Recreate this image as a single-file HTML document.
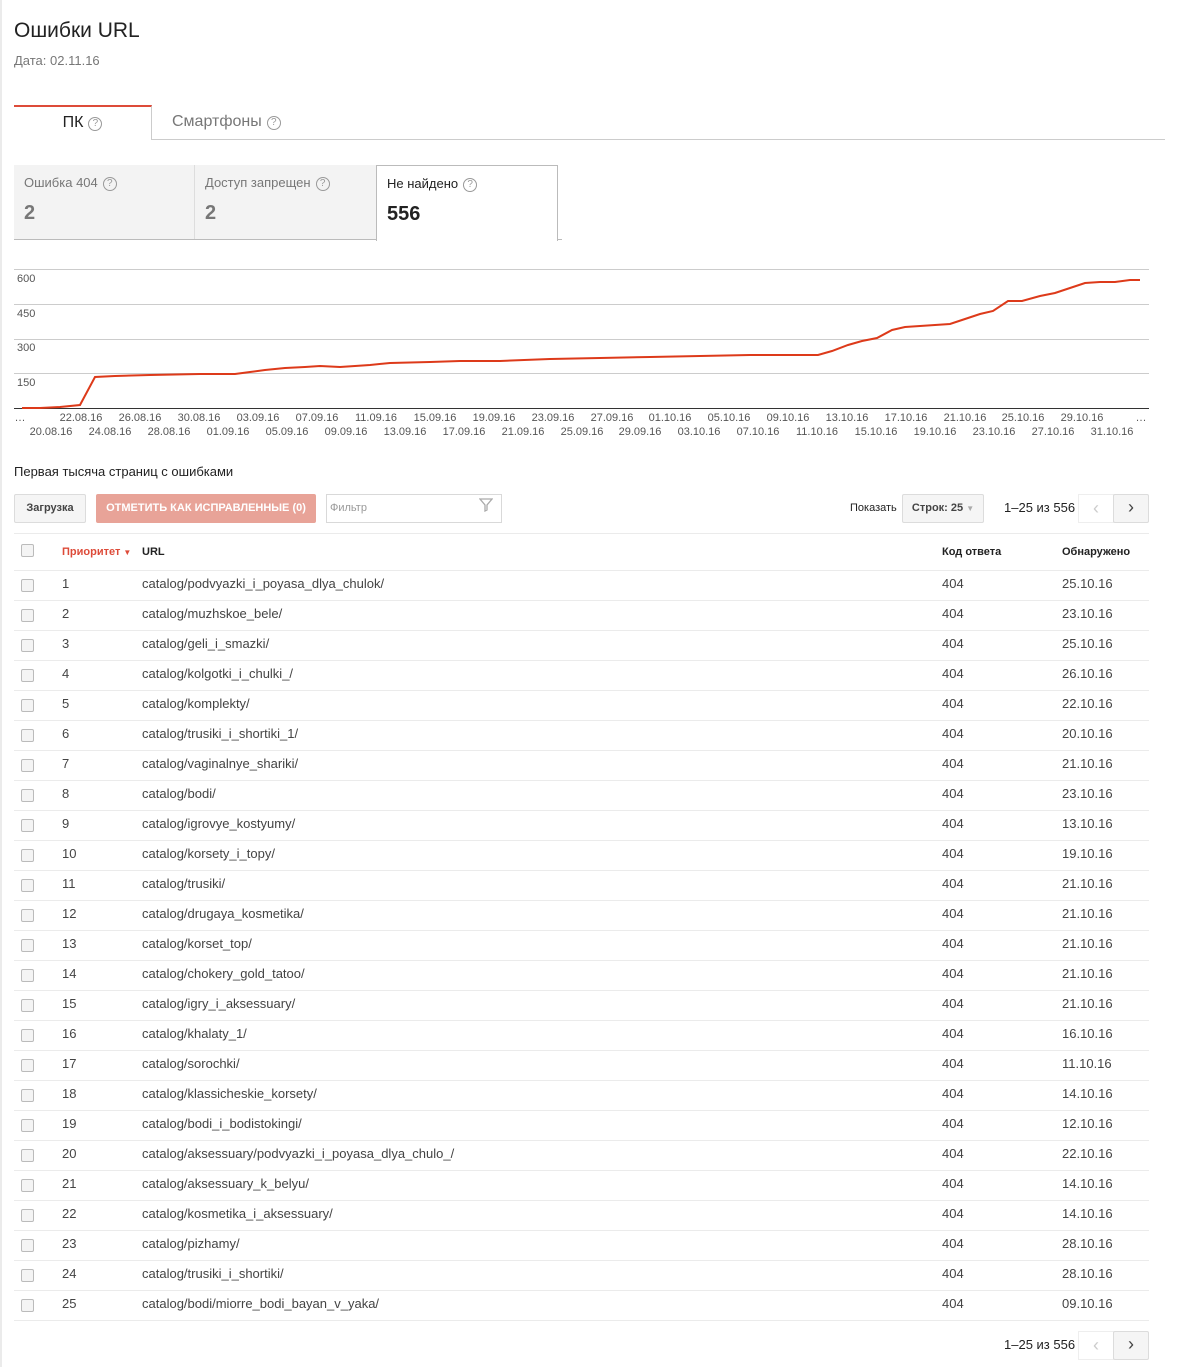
<!DOCTYPE html>
<html><head><meta charset="utf-8">
<style>
*{box-sizing:border-box;margin:0;padding:0}
body{width:1184px;height:1367px;background:#fff;font-family:"Liberation Sans",Arial,sans-serif;position:relative;overflow:hidden;color:#222}
.a{position:absolute;white-space:nowrap}
.q{display:inline-block;width:14px;height:14px;border:1px solid #999;border-radius:50%;font-size:10px;line-height:12px;text-align:center;color:#999;vertical-align:1px;margin-left:5px}
.cb{position:absolute;left:21px;width:13px;height:13px;border:1px solid #bbb;border-radius:2px;background:#f4f4f4}
.row{position:absolute;left:14px;width:1135px;height:30px;border-bottom:1px solid #ebebeb;font-size:13px;color:#444}
.row span{position:absolute;top:5px}
.btn{position:absolute;border:1px solid #dcdcdc;background:#f5f5f5;border-radius:2px;font-size:11px;font-weight:bold;color:#444;text-align:center}
</style></head><body>
<div class="a" style="left:0;top:0;width:2px;height:1367px;background:#ebebeb"></div>
<div class="a" style="left:14px;top:19px;font-size:21px;color:#222">Ошибки URL</div>
<div class="a" style="left:14px;top:53px;font-size:13px;color:#777">Дата: 02.11.16</div>

<div class="a" style="left:14px;top:139px;width:1151px;border-top:1px solid #ccc"></div>
<div class="a" style="left:14px;top:105px;width:138px;height:35px;background:#fff;border-top:2px solid #dd4b39;border-right:1px solid #ccc;font-size:16px;text-align:center;padding-top:7px;color:#222">ПК<span class="q">?</span></div>
<div class="a" style="left:172px;top:113px;font-size:16px;color:#777">Смартфоны<span class="q">?</span></div>

<div class="a" style="left:14px;top:165px;width:181px;height:75px;background:#f3f3f3;border-right:1px solid #ddd"></div>
<div class="a" style="left:195px;top:165px;width:181px;height:75px;background:#f3f3f3"></div>
<div class="a" style="left:14px;top:239px;width:548px;border-top:1px solid #bbb"></div>
<div class="a" style="left:376px;top:165px;width:182px;height:76px;background:#fff;border:1px solid #bbb;border-bottom:none"></div>
<div class="a" style="left:24px;top:175px;font-size:13px;color:#777">Ошибка 404<span class="q">?</span></div>
<div class="a" style="left:24px;top:202px;font-size:20px;font-weight:bold;color:#777">2</div>
<div class="a" style="left:205px;top:175px;font-size:13px;color:#777">Доступ запрещен<span class="q">?</span></div>
<div class="a" style="left:205px;top:202px;font-size:20px;font-weight:bold;color:#777">2</div>
<div class="a" style="left:387px;top:176px;font-size:13px;color:#222">Не найдено<span class="q">?</span></div>
<div class="a" style="left:387px;top:203px;font-size:20px;font-weight:bold;color:#222">556</div>

<svg class="a" style="left:0;top:260px" width="1184" height="185" font-family="Liberation Sans, Arial, sans-serif" font-size="11" fill="#555">
<g stroke="#ccc" stroke-width="1"><line x1="14" y1="9.5" x2="1149" y2="9.5"/><line x1="14" y1="44.5" x2="1149" y2="44.5"/><line x1="14" y1="79.5" x2="1149" y2="79.5"/><line x1="14" y1="113.5" x2="1149" y2="113.5"/></g>
<line x1="14" y1="148.5" x2="1149" y2="148.5" stroke="#333"/>
<text x="17" y="22">600</text><text x="17" y="57">450</text><text x="17" y="91">300</text><text x="17" y="126">150</text>
<polyline fill="none" stroke="#dd3a1a" stroke-width="2" points="22,148 40,148 60,147 80,145 95,117 115,116 150,115 200,114 235,114 250,112 265,110 285,108 305,107 320,106 340,107 355,106 370,105 390,103 430,102 460,101 500,101 550,99 600,98 650,97 700,96 750,95 818,95 832,91 848,85 862,81 877,78 892,70 905,67 920,66 950,64 965,59 980,54 993,51 1008,41 1022,41 1040,36 1055,33 1070,28 1085,23 1100,22 1115,22 1130,20 1140,20"/>
<g text-anchor="middle">
<text x="20" y="161">…</text><text x="1141" y="161">…</text>
<text x="81" y="161">22.08.16</text><text x="140" y="161">26.08.16</text><text x="199" y="161">30.08.16</text><text x="258" y="161">03.09.16</text><text x="317" y="161">07.09.16</text><text x="376" y="161">11.09.16</text><text x="435" y="161">15.09.16</text><text x="494" y="161">19.09.16</text><text x="553" y="161">23.09.16</text><text x="612" y="161">27.09.16</text><text x="670" y="161">01.10.16</text><text x="729" y="161">05.10.16</text><text x="788" y="161">09.10.16</text><text x="847" y="161">13.10.16</text><text x="906" y="161">17.10.16</text><text x="965" y="161">21.10.16</text><text x="1023" y="161">25.10.16</text><text x="1082" y="161">29.10.16</text>
<text x="51" y="175">20.08.16</text><text x="110" y="175">24.08.16</text><text x="169" y="175">28.08.16</text><text x="228" y="175">01.09.16</text><text x="287" y="175">05.09.16</text><text x="346" y="175">09.09.16</text><text x="405" y="175">13.09.16</text><text x="464" y="175">17.09.16</text><text x="523" y="175">21.09.16</text><text x="582" y="175">25.09.16</text><text x="640" y="175">29.09.16</text><text x="699" y="175">03.10.16</text><text x="758" y="175">07.10.16</text><text x="817" y="175">11.10.16</text><text x="876" y="175">15.10.16</text><text x="935" y="175">19.10.16</text><text x="994" y="175">23.10.16</text><text x="1053" y="175">27.10.16</text><text x="1112" y="175">31.10.16</text>
</g></svg>

<div class="a" style="left:14px;top:464px;font-size:13px;color:#222">Первая тысяча страниц с ошибками</div>
<div class="btn" style="left:14px;top:494px;width:72px;height:29px;line-height:27px">Загрузка</div>
<div class="btn" style="left:96px;top:494px;width:220px;height:29px;line-height:27px;background:#e8a398;border-color:#e8a398;color:#fff">ОТМЕТИТЬ КАК ИСПРАВЛЕННЫЕ (0)</div>
<div class="a" style="left:326px;top:494px;width:176px;height:29px;border:1px solid #d9d9d9;font-size:11px;color:#999;padding:7px 0 0 3px">Фильтр</div>
<svg class="a" style="left:479px;top:498px" width="14" height="14"><path d="M1 1H13L8 7V12L6 13V7Z" fill="none" stroke="#aaa" stroke-width="1.3"/></svg>
<div class="a" style="left:850px;top:502px;font-size:11px;color:#222">Показать</div>
<div class="btn" style="left:902px;top:494px;width:82px;height:29px;line-height:27px">Строк: 25 <span style="color:#aaa;font-size:8px">▼</span></div>
<div class="a" style="left:1004px;top:500px;font-size:13px;color:#222">1–25 из 556</div>
<div class="a" style="left:1078px;top:494px;width:36px;height:29px;border:1px solid #eee;background:#fff;text-align:center;font-size:18px;color:#ccc;line-height:26px">‹</div>
<div class="btn" style="left:1113px;top:494px;width:36px;height:29px;font-size:18px;line-height:24px;font-weight:normal;color:#444">›</div>

<div class="a" style="left:14px;top:533px;width:1135px;border-top:1px solid #ebebeb"></div>
<div class="row" style="top:541px;height:30px">
<span class="cb" style="left:7px;top:3px;position:absolute"></span>
<span style="left:48px;top:5px;font-size:11px;font-weight:bold;color:#dd4b39">Приоритет <span style="position:static;font-size:8px">▼</span></span>
<span style="left:128px;top:5px;font-size:11px;font-weight:bold;color:#222">URL</span>
<span style="left:928px;top:5px;font-size:11px;font-weight:bold;color:#222">Код ответа</span>
<span style="left:1048px;top:5px;font-size:11px;font-weight:bold;color:#222">Обнаружено</span>
</div>
<div id="rows"></div>
<script>
var d=[["catalog/podvyazki_i_poyasa_dlya_chulok/","25.10.16"],["catalog/muzhskoe_bele/","23.10.16"],["catalog/geli_i_smazki/","25.10.16"],["catalog/kolgotki_i_chulki_/","26.10.16"],["catalog/komplekty/","22.10.16"],["catalog/trusiki_i_shortiki_1/","20.10.16"],["catalog/vaginalnye_shariki/","21.10.16"],["catalog/bodi/","23.10.16"],["catalog/igrovye_kostyumy/","13.10.16"],["catalog/korsety_i_topy/","19.10.16"],["catalog/trusiki/","21.10.16"],["catalog/drugaya_kosmetika/","21.10.16"],["catalog/korset_top/","21.10.16"],["catalog/chokery_gold_tatoo/","21.10.16"],["catalog/igry_i_aksessuary/","21.10.16"],["catalog/khalaty_1/","16.10.16"],["catalog/sorochki/","11.10.16"],["catalog/klassicheskie_korsety/","14.10.16"],["catalog/bodi_i_bodistokingi/","12.10.16"],["catalog/aksessuary/podvyazki_i_poyasa_dlya_chulo_/","22.10.16"],["catalog/aksessuary_k_belyu/","14.10.16"],["catalog/kosmetika_i_aksessuary/","14.10.16"],["catalog/pizhamy/","28.10.16"],["catalog/trusiki_i_shortiki/","28.10.16"],["catalog/bodi/miorre_bodi_bayan_v_yaka/","09.10.16"]];
var h="";for(var i=0;i<25;i++){var t=571+i*30;h+='<div class="row" style="top:'+t+'px"><span class="cb" style="left:7px;top:8px"></span><span style="left:48px">'+(i+1)+'</span><span style="left:128px">'+d[i][0]+'</span><span style="left:928px">404</span><span style="left:1048px">'+d[i][1]+'</span></div>';}
document.getElementById("rows").innerHTML=h;
</script>
<div class="a" style="left:1004px;top:1337px;font-size:13px;color:#222">1–25 из 556</div>
<div class="a" style="left:1078px;top:1331px;width:36px;height:29px;border:1px solid #eee;background:#fff;text-align:center;font-size:18px;color:#ccc;line-height:26px">‹</div>
<div class="btn" style="left:1113px;top:1331px;width:36px;height:29px;font-size:18px;line-height:24px;font-weight:normal;color:#444">›</div>
</body></html>
